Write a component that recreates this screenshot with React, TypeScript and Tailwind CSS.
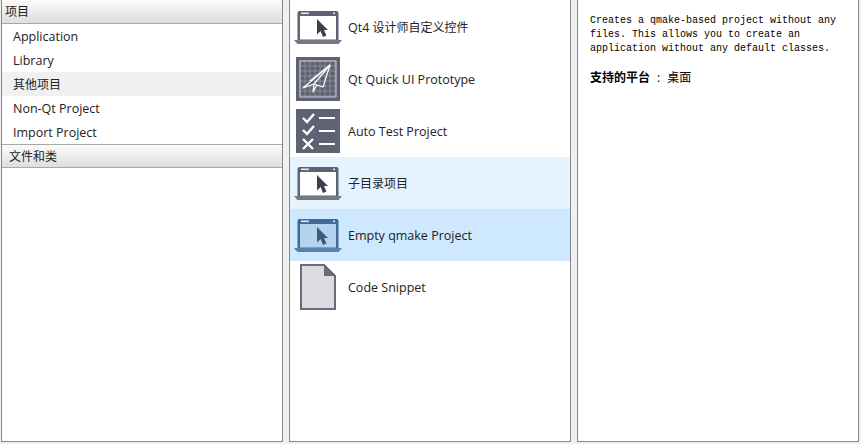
const sans = 'font-["Open_Sans","Noto_Sans_CJK_SC",sans-serif]';

function GroupHeader({ label, first }: { label: string; first?: boolean }) {
  return (
    <div
      className={`flex h-[24px] items-center border-b border-[#a8a8a8] bg-gradient-to-b from-[#fbfbfb] to-[#dedede] pt-px text-[12px] text-[#222] ${
        first ? 'pl-[3px]' : 'border-t pl-[7px]'
      }`}
    >
      {label}
    </div>
  );
}

function LaptopIcon({ tint }: { tint?: boolean }) {
  const body = tint ? '#3e6b99' : '#5f6272';
  const screen = tint ? '#b4d3ef' : '#ffffff';
  const cursor = tint ? '#3a5a80' : '#3c3f4d';
  return (
    <svg width="48" height="36" viewBox="0 0 48 36">
      <path d="M3.5 4 Q3.5 2 5.5 2 H42.5 Q44.5 2 44.5 4 V31 H3.5 Z" fill={body} />
      <rect x="6" y="7" width="36" height="23.5" fill={screen} />
      <rect x="7" y="3.5" width="8" height="1.6" fill="#e6e8ee" />
      <rect x="39" y="3.5" width="2" height="1.6" fill="#e6e8ee" />
      <path d="M0 31 H48 L45 34.5 Q44.5 35 43.5 35 H4.5 Q3.5 35 3 34.5 Z" fill={tint ? '#5483ad' : '#767985'} />
      <path d="M23 10 L34 21 H30 L32.4 26.5 L29 28 L26.6 22 L23 25.5 Z" fill={cursor} />
    </svg>
  );
}

function PlaneIcon() {
  return (
    <svg width="44" height="44" viewBox="0 0 44 44">
      <rect width="44" height="44" fill="#5f6272" />
      <g stroke="#9a9da8" strokeWidth="0.7">
        {[5, 10, 15, 20, 25, 30, 35, 40].map((p) => (
          <g key={p}>
            <line x1={p - 1} y1="4" x2={p - 1} y2="40" />
            <line x1="4" y1={p - 1} x2="40" y2={p - 1} />
          </g>
        ))}
      </g>
      <rect x="4" y="4" width="36" height="36" fill="none" stroke="#c9cad2" strokeWidth="1" />
      <g fill="none" stroke="#ffffff" strokeWidth="1.2" strokeLinejoin="round">
        <path d="M34 8 L7 31 L18 27 L27 30 Z" />
        <path d="M34 8 L18 27 L17 35 L21 28" />
        <path d="M34 8 L14 24" />
      </g>
    </svg>
  );
}

function ChecklistIcon() {
  return (
    <svg width="44" height="44" viewBox="0 0 44 44">
      <rect width="44" height="44" fill="#5f6272" />
      <g fill="none" stroke="#ffffff" strokeWidth="2.4">
        <path d="M7 9 L11 13 L18 5" />
        <path d="M7 21 L11 25 L18 17" />
        <path d="M7 30 L17 40 M17 30 L7 40" />
      </g>
      <g fill="#ffffff">
        <rect x="23" y="8" width="16" height="2" />
        <rect x="23" y="21" width="16" height="2" />
        <rect x="23" y="34" width="16" height="2" />
      </g>
    </svg>
  );
}

function FileIcon() {
  return (
    <svg width="36" height="46" viewBox="0 0 36 46">
      <path d="M1 1 H24 L35 12 V45 H1 Z" fill="#dcdde1" stroke="#6a6c7a" strokeWidth="2" />
      <path d="M24 0 L36 12 H24 Z" fill="#6a6c7a" />
    </svg>
  );
}

const categories = ['Application', 'Library', '其他项目', 'Non-Qt Project', 'Import Project'];

const templates = [
  { name: <>Qt4 <span className="text-[12px]">设计师自定义控件</span></>, icon: <LaptopIcon />, bg: '' },
  { name: 'Qt Quick UI Prototype', icon: <PlaneIcon />, bg: '' },
  { name: 'Auto Test Project', icon: <ChecklistIcon />, bg: '' },
  { name: <span className="text-[12px]">子目录项目</span>, icon: <LaptopIcon />, bg: 'bg-[#e5f3ff]' },
  { name: 'Empty qmake Project', icon: <LaptopIcon tint />, bg: 'bg-[#cde8ff]' },
  { name: 'Code Snippet', icon: <FileIcon />, bg: '' },
];

export default function App() {
  return (
    <div className={`flex h-[444px] w-[861px] gap-[6px] bg-[#f0f0f0] pb-[2px] pl-px pr-[2px] ${sans}`}>
      {/* Categories */}
      <div className="flex w-[282px] flex-col border-x border-b border-[#828790] bg-white">
        <GroupHeader label="项目" first />
        {categories.map((c) => (
          <div
            key={c}
            className={`flex h-[24px] items-center pl-[11px] text-[#222] ${
              c === '其他项目' ? 'bg-[#f0f0f0] pt-px text-[12px]' : 'pt-[3px] text-[12.5px]'
            }`}
          >
            {c}
          </div>
        ))}
        <GroupHeader label="文件和类" />
      </div>

      {/* Templates */}
      <div className="flex w-[282px] flex-col border-x border-b border-[#828790] bg-white pt-px">
        {templates.map((t, i) => (
          <div key={i} className={`flex h-[52px] items-center ${t.bg}`}>
            <div className="flex w-[58px] shrink-0 pl-[4px]">
              <div className="flex w-[48px] justify-center">{t.icon}</div>
            </div>
            <span className="pt-[2px] text-[12.5px] text-[#222]">{t.name}</span>
          </div>
        ))}
      </div>

      {/* Description */}
      <div className="flex-1 border-x border-b border-[#828790] bg-white pl-[12px] pt-[14px]">
        <p className='font-["Liberation_Mono","Noto_Sans_CJK_SC",monospace] text-[10px] leading-[14px] text-black'>
          Creates a qmake-based project without any
          <br />
          files. This allows you to create an
          <br />
          application without any default classes.
        </p>
        <p className="mt-[14px] text-[12px] leading-[16px] text-black">
          <span className="font-bold">支持的平台</span>
          <span className="mx-[7px]">:</span>桌面
        </p>
      </div>
    </div>
  );
}
